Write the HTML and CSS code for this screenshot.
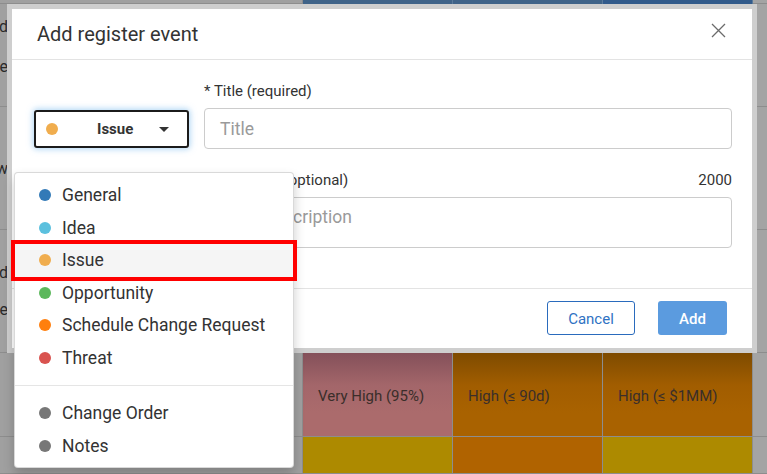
FILE: index.html
```html
<!DOCTYPE html>
<html lang="en">
<head>
<meta charset="utf-8">
<title>Add register event</title>
<link rel="stylesheet" href="styles.css">
</head>
<body>
<div class="grid">
  <div class="cell c-left"></div>
  <div class="cell c-head"></div>
  <div class="cell c-head"></div>
  <div class="cell c-head c-head-dark"></div>
  <div class="cell c-right"></div>

  <div class="cell c-left c-stack c-stack-top"><span class="stub">Approved</span><span class="stub">Complete</span></div>
  <div class="cell"></div>
  <div class="cell"></div>
  <div class="cell"></div>
  <div class="cell c-right"></div>

  <div class="cell c-left c-stack"><span class="stub">Overview</span></div>
  <div class="cell"></div>
  <div class="cell"></div>
  <div class="cell"></div>
  <div class="cell c-right"></div>

  <div class="cell c-left c-stack c-stack-low"><span class="stub">Closed</span><span class="stub">Complete</span></div>
  <div class="cell"></div>
  <div class="cell"></div>
  <div class="cell"></div>
  <div class="cell c-right"></div>

  <div class="cell c-left"></div>
  <div class="cell c-pink">Very High (95%)</div>
  <div class="cell c-orange">High (≤ 90d)</div>
  <div class="cell c-orange">High (≤ $1MM)</div>
  <div class="cell c-right"></div>

  <div class="cell c-left"></div>
  <div class="cell c-yellow"></div>
  <div class="cell c-orange2"></div>
  <div class="cell c-yellow"></div>
  <div class="cell c-right"></div>
</div>

<div class="modal">
  <div class="modal-header">
    <h4 class="modal-title">Add register event</h4>
    <span class="close" aria-label="Close">
      <svg width="15" height="15" viewBox="0 0 15 15"><path d="M1 1 L14 14 M14 1 L1 14" stroke="#6b6b6b" stroke-width="1.3" fill="none"/></svg>
    </span>
  </div>
  <div class="modal-body">
    <div class="type-col">
      <div class="type-select">
        <span class="dot dot-issue"></span>
        <span class="type-label">Issue</span>
        <span class="caret"></span>
      </div>
    </div>
    <div class="fields">
      <div class="field-label">* Title (required)</div>
      <div class="input">Title</div>
      <div class="field-label desc-label"><span>Description (optional)</span><span>2000</span></div>
      <div class="input textarea">Enter description</div>
    </div>
  </div>
  <div class="modal-footer">
    <button class="btn btn-cancel">Cancel</button>
    <button class="btn btn-add">Add</button>
  </div>
</div>

<ul class="menu">
  <li class="menu-item"><span class="dot dot-general"></span>General</li>
  <li class="menu-item"><span class="dot dot-idea"></span>Idea</li>
  <li class="menu-item is-active"><span class="dot dot-issue"></span>Issue</li>
  <li class="menu-item"><span class="dot dot-opportunity"></span>Opportunity</li>
  <li class="menu-item"><span class="dot dot-scr"></span>Schedule Change Request</li>
  <li class="menu-item"><span class="dot dot-threat"></span>Threat</li>
  <li class="menu-divider"></li>
  <li class="menu-item"><span class="dot dot-grey"></span>Change Order</li>
  <li class="menu-item"><span class="dot dot-grey"></span>Notes</li>
</ul>
</body>
</html>
```

FILE: styles.css
```css
html, body {
  margin: 0;
  padding: 0;
}
body {
  width: 767px;
  height: 474px;
  overflow: hidden;
  position: relative;
  background: #9e9e9e;
  font-family: Roboto, "Liberation Sans", sans-serif;
  color: #333;
}

/* background page (dimmed) */
.grid {
  display: grid;
  grid-template-columns: 303px 150px 150px 150px 1fr;
  grid-template-rows: 4px 103px 123px 123px 84px 1fr;
  height: 474px;
}
.cell {
  box-sizing: border-box;
  border-right: 1px solid #8d8d8d;
  border-bottom: 1px solid #8d8d8d;
  background: #9e9e9e;
  font-size: 15px;
  color: #3a2e2a;
  display: flex;
  align-items: center;
  padding-left: 15px;
  padding-top: 3px;
  white-space: nowrap;
}
.c-left { background: #a0a0a0; padding-left: 0; padding-top: 0; }
.c-right { background: #a4a4a4; border-right: none; padding-left: 0; padding-top: 0; }
.c-head { background: #3f6388; border-right-color: #5a7a9a; border-bottom: none; padding-top: 0; }
.c-head-dark { background: #325b8b; }
.c-stack {
  flex-direction: column;
  align-items: flex-start;
  justify-content: center;
  gap: 21px;
  color: #2a2a2a;
}
.c-stack-top { padding-bottom: 17px; }
.c-stack-low { gap: 18px; }
.stub {
  display: block;
  width: 8px;
  overflow: hidden;
  direction: rtl;
  white-space: nowrap;
  font-size: 16px;
  line-height: 19px;
}
.c-pink { background: linear-gradient(to bottom, #84505a 0, #a3666a 32px, #ab6b6c 60px); }
.c-orange { background: linear-gradient(to bottom, #7e4b00 0, #a15d00 32px, #a96200 60px); }
.c-yellow { background: #ad8a00; }
.c-orange2 { background: #b06300; }

/* modal */
.modal {
  position: absolute;
  left: 7px;
  top: 4px;
  width: 750px;
  height: 349px;
  box-sizing: border-box;
  border: 5px solid #cecece;
  background: #fff;
  display: flex;
  flex-direction: column;
}
.modal-header {
  height: 50px;
  border-bottom: 1px solid #e3e3e3;
  display: flex;
  align-items: center;
  justify-content: space-between;
  padding: 0 26px 0 25px;
}
.modal-title {
  margin: 0;
  font-size: 20px;
  font-weight: 400;
  color: #333;
}
.close {
  align-self: flex-start;
  margin-top: 14px;
  width: 15px;
  height: 15px;
  display: block;
}
.close svg { display: block; }

.modal-body {
  display: flex;
  padding: 23px 20px 40px 22px;
}
.type-col {
  width: 155px;
  flex: none;
  margin-right: 15px;
}
.type-select {
  margin-top: 27px;
  height: 38px;
  box-sizing: border-box;
  border: 2px solid #1b1b1b;
  border-radius: 3px;
  box-shadow: 0 0 6px 1px rgba(102, 175, 233, 0.55);
  display: flex;
  align-items: center;
  padding: 0 18px 0 10px;
}
.type-label {
  margin-left: 39px;
  font-size: 15px;
  font-weight: 700;
  color: #333;
}
.caret {
  margin-left: auto;
  width: 0;
  height: 0;
  border-top: 5px solid #333;
  border-left: 5px solid transparent;
  border-right: 5px solid transparent;
}
.fields {
  flex: 1;
  display: flex;
  flex-direction: column;
}
.field-label {
  font-size: 15px;
  line-height: 16px;
  color: #333;
  margin-bottom: 9px;
}
.desc-label {
  margin-top: 23px;
  display: flex;
  justify-content: space-between;
}
.input {
  height: 41px;
  box-sizing: border-box;
  border: 1px solid #ccc;
  border-radius: 4px;
  padding: 0 15px;
  font-size: 17.5px;
  color: #9a9a9a;
  display: flex;
  align-items: center;
}
.textarea {
  height: 51px;
  align-items: flex-start;
  padding-top: 9px;
  line-height: 20px;
}

.modal-footer {
  border-top: 1px solid #e3e3e3;
  display: flex;
  justify-content: flex-end;
  gap: 23px;
  padding: 12px 25px 13px;
}
.btn {
  height: 34px;
  box-sizing: border-box;
  border-radius: 3px;
  font-family: Roboto, "Liberation Sans", sans-serif;
  font-size: 15px;
  padding: 2px 0 0;
}
.btn-cancel {
  width: 88px;
  background: #fff;
  border: 1px solid #2a6bbd;
  color: #2f72c3;
}
.btn-add {
  width: 69px;
  background: #5b9bdf;
  border: none;
  color: #fff;
  font-weight: 500;
}

/* dots */
.dot {
  width: 12px;
  height: 12px;
  border-radius: 50%;
  flex: none;
  display: inline-block;
}
.dot-general { background: #337ab7; }
.dot-idea { background: #5bc0de; }
.dot-issue { background: #f0ad4e; }
.dot-opportunity { background: #5cb85c; }
.dot-scr { background: #ff7f0e; }
.dot-threat { background: #d9534f; }
.dot-grey { background: #777; }

/* dropdown menu */
.menu {
  position: absolute;
  left: 14px;
  top: 172px;
  width: 280px;
  box-sizing: border-box;
  margin: 0;
  padding: 6px 0 5px;
  list-style: none;
  background: #fff;
  border: 1px solid rgba(0, 0, 0, 0.15);
  border-radius: 4px;
  box-shadow: 0 6px 12px rgba(0, 0, 0, 0.2);
}
.menu-item {
  height: 32.5px;
  display: flex;
  align-items: center;
  padding-left: 24px;
  font-size: 17.5px;
  color: #333;
}
.menu-item .dot { margin-right: 11px; }
.menu-item.is-active {
  background: #f5f5f5;
  outline: 4px solid #ff0000;
  outline-offset: 0;
}
.menu-divider {
  height: 1px;
  background: #e5e5e5;
  margin: 11px 0;
}
```
